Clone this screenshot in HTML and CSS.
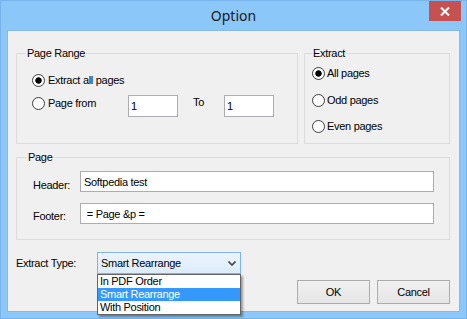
FILE: index.html
```html
<!DOCTYPE html>
<html>
<head>
<meta charset="utf-8">
<title>Option</title>
<link rel="stylesheet" href="styles.css">
</head>
<body>
<div class="window">
  <div class="titlebar">
    <span></span>
    <div class="title">Option</div>
    <div class="close">
      <svg width="10" height="9" viewBox="0 0 10 9"><path d="M1 0.5 L9 8.5 M9 0.5 L1 8.5" stroke="#fff" stroke-width="2" fill="none"/></svg>
    </div>
  </div>
  <div class="client">
    <div class="top-row">
      <div class="group range">
        <div class="legend">Page Range</div>
        <div class="radio-row r1"><span class="radio checked"></span><span class="lbl">Extract all pages</span></div>
        <div class="from-row">
          <div class="radio-row from"><span class="radio"></span><span class="lbl">Page from</span></div>
          <div class="field small">1</div>
          <span class="to">To</span>
          <div class="field small">1</div>
        </div>
      </div>
      <div class="group extract">
        <div class="legend">Extract</div>
        <div class="radio-row e1"><span class="radio checked"></span><span class="lbl">All pages</span></div>
        <div class="radio-row e2"><span class="radio"></span><span class="lbl">Odd pages</span></div>
        <div class="radio-row e3"><span class="radio"></span><span class="lbl">Even pages</span></div>
      </div>
    </div>
    <div class="group page">
      <div class="legend">Page</div>
      <div class="frow header"><span class="flabel">Header:</span><div class="field wide">Softpedia test</div></div>
      <div class="frow footer"><span class="flabel">Footer:</span><div class="field wide"> = Page &amp;p =</div></div>
    </div>
    <div class="type-row">
      <span class="tlabel">Extract Type:</span>
      <div class="combo">
        <span class="combo-text">Smart Rearrange</span>
        <svg class="chev" width="8" height="5" viewBox="0 0 8 5"><path d="M0.5 0.5 L4 4 L7.5 0.5" stroke="#444" stroke-width="1.6" fill="none"/></svg>
        <div class="list">
          <div class="item">In PDF Order</div>
          <div class="item selected">Smart Rearrange</div>
          <div class="item">With Position</div>
        </div>
      </div>
    </div>
    <div class="buttons">
      <div class="btn">OK</div>
      <div class="btn">Cancel</div>
    </div>
  </div>
</div>
</body>
</html>
```

FILE: styles.css
```css
* { box-sizing: border-box; }
html, body { margin: 0; padding: 0; }
body {
  width: 467px;
  height: 319px;
  overflow: hidden;
  font-family: "Liberation Sans", Arial, sans-serif;
  font-size: 11px;
  letter-spacing: -0.3px;
  color: #000;
}
.window {
  width: 467px;
  height: 319px;
  background: #8bc7f8;
  border: 1px solid #78b4ea;
  display: flex;
  flex-direction: column;
}
.titlebar {
  height: 29px;
  flex: none;
  display: grid;
  grid-template-columns: 1fr auto 1fr;
  align-items: start;
}
.title {
  font-family: "Noto Sans", sans-serif;
  font-size: 14px;
  line-height: 29px;
  letter-spacing: 0;
  color: #1a1a1a;
}
.close {
  justify-self: end;
  width: 32px;
  height: 20px;
  margin-right: 5px;
  background: #c75050;
  display: flex;
  align-items: center;
  justify-content: center;
}
.client {
  margin: 0 6px;
  height: 282px;
  flex: none;
  background: #f0f0f0;
  border: 1px solid #86b8e6;
  padding: 22px 9px 0 8px;
  display: flex;
  flex-direction: column;
}
.top-row {
  display: flex;
  gap: 6px;
  height: 91px;
  flex: none;
}
.group {
  border: 1px solid #dcdcdc;
  display: flex;
  flex-direction: column;
}
.range { width: 282px; }
.extract { width: 146px; }
.legend {
  align-self: flex-start;
  line-height: 13px;
  height: 13px;
  margin-top: -7px;
  padding: 0 1px;
  background: #f0f0f0;
}
.range .legend { margin-left: 9px; }
.extract .legend { margin-left: 7px; }
.page .legend { margin-left: 10px; }

.radio-row {
  display: flex;
  align-items: center;
  height: 13px;
  line-height: 13px;
  white-space: nowrap;
}
.radio {
  width: 13px;
  height: 13px;
  flex: none;
  border-radius: 50%;
  border: 1px solid #3c3c3c;
  background: #fff;
}
.radio.checked {
  background: radial-gradient(circle, #000 0 2.8px, #fff 3.6px);
}
.range .lbl { margin-left: 3px; }
.extract .lbl { margin-left: 2px; }

.r1 { margin: 14px 0 0 15px; }
.from-row {
  display: flex;
  align-items: flex-start;
  margin: 8px 0 0 15px;
}
.from { width: 96px; margin-top: 2px; }
.to {
  width: 31px;
  margin: 1px 0 0 15px;
  line-height: 13px;
}
.field {
  border: 1px solid #abadb3;
  background: #fff;
  display: flex;
  align-items: center;
  white-space: pre;
  padding: 0 3px;
}
.field.small {
  width: 50px;
  height: 22px;
  padding-left: 2px;
}
.field.wide {
  width: 354px;
  height: 21px;
}

.extract .e1 { margin: 7px 0 0 7px; }
.extract .e2 { margin: 14px 0 0 7px; }
.extract .e3 { margin: 13px 0 0 7px; }

.page {
  margin-top: 13px;
  height: 83px;
  flex: none;
}
.frow {
  display: flex;
  align-items: flex-start;
  margin-left: 16px;
}
.frow.header { margin-top: 7px; }
.frow.footer { margin-top: 11px; }
.flabel {
  width: 47px;
  line-height: 13px;
  margin-top: 8px;
}
.footer .flabel { margin-top: 7px; }

.type-row {
  display: flex;
  align-items: center;
  margin-top: 12px;
  height: 22px;
  flex: none;
}
.tlabel { width: 81px; }
.combo {
  position: relative;
  width: 144px;
  height: 22px;
  border: 1px solid #7eb4ea;
  background: linear-gradient(#ecf4fc, #dcecfc);
  display: flex;
  align-items: center;
  padding-left: 3px;
}
.chev {
  margin-left: auto;
  margin-right: 4px;
}
.list {
  position: absolute;
  top: calc(100% + 1px);
  left: -1px;
  width: 144px;
  border: 1px solid #646464;
  background: #fff;
  box-shadow: 2px 2px 2px rgba(0, 0, 0, 0.35);
}
.item {
  height: 13px;
  line-height: 13px;
  padding-left: 2px;
  white-space: nowrap;
}
.item.selected {
  background: #3399ff;
  color: #fff;
}
.buttons {
  display: flex;
  justify-content: flex-end;
  gap: 7px;
  margin-top: 6px;
}
.btn {
  width: 73px;
  height: 24px;
  border: 1px solid #acacac;
  background: linear-gradient(#f0f0f0, #e5e5e5);
  display: flex;
  align-items: center;
  justify-content: center;
}
```
